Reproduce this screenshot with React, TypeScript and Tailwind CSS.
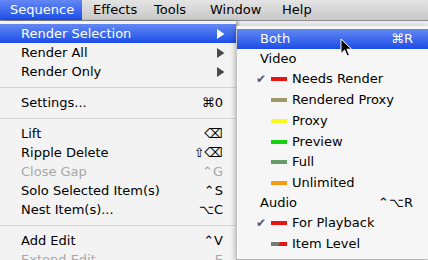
import clsx from "clsx";

type Row = {
  label: string;
  shortcut?: string;
  arrow?: boolean;
  active?: boolean;
  disabled?: boolean;
};

type SubRow = {
  label: string;
  shortcut?: string;
  bar?: string;
  split?: boolean;
  check?: boolean;
  active?: boolean;
  tall?: boolean;
};

const mainRows: (Row | "sep")[] = [
  { label: "Render Selection", arrow: true, active: true },
  { label: "Render All", arrow: true },
  { label: "Render Only", arrow: true },
  "sep",
  { label: "Settings...", shortcut: "⌘0" },
  "sep",
  { label: "Lift", shortcut: "⌫" },
  { label: "Ripple Delete", shortcut: "⇧⌫" },
  { label: "Close Gap", shortcut: "⌃G", disabled: true },
  { label: "Solo Selected Item(s)", shortcut: "⌃S" },
  { label: "Nest Item(s)...", shortcut: "⌥C" },
  "sep",
  { label: "Add Edit", shortcut: "⌃V" },
  { label: "Extend Edit", shortcut: "E", disabled: true },
];

const subRows: SubRow[] = [
  { label: "Both", shortcut: "⌘R", active: true },
  { label: "Video" },
  { label: "Needs Render", bar: "bg-[#e81414]", check: true },
  { label: "Rendered Proxy", bar: "bg-[#9c9a6c]", tall: true },
  { label: "Proxy", bar: "bg-[#f8f822]", tall: true },
  { label: "Preview", bar: "bg-[#12d012]", tall: true },
  { label: "Full", bar: "bg-[#6a9a6a]" },
  { label: "Unlimited", bar: "bg-[#f8990f]", tall: true },
  { label: "Audio", shortcut: "⌃⌥R" },
  { label: "For Playback", bar: "bg-[#e81414]", check: true },
  { label: "Item Level", split: true, tall: true },
];

function Arrow({ white }: { white?: boolean }) {
  return (
    <svg width="8" height="10" viewBox="0 0 8 10">
      <polygon points="0,0 7.5,5 0,10" fill={white ? "#ffffff" : "#4a4a4a"} />
    </svg>
  );
}

function MenuItem({ row }: { row: Row }) {
  return (
    <div
      className={clsx(
        "flex h-[19px] items-center pl-[21px] leading-[19px]",
        row.arrow ? "pr-[11px]" : "pr-[13px]",
        row.active
          ? "bg-linear-to-b from-[#6387f4] to-[#1d4be6] text-white"
          : row.disabled
            ? "text-[#a8a8a8]"
            : "text-black"
      )}
    >
      <span className="flex-1">{row.label}</span>
      {row.shortcut && <span>{row.shortcut}</span>}
      {row.arrow && <Arrow white={row.active} />}
    </div>
  );
}

function SubItem({ row }: { row: SubRow }) {
  const hasBar = row.bar || row.split;
  return (
    <div
      className={clsx(
        "flex items-center pr-[15px]",
        row.tall ? "h-[21px]" : "h-[20px]",
        hasBar ? "pl-[19px]" : "pl-[23px]",
        row.active ? "bg-linear-to-b from-[#6387f4] to-[#1d4be6] text-white" : "text-black"
      )}
    >
      {hasBar && (
        <>
          <span className="w-[15px] text-[12px] leading-none text-[#5c5c5c]">{row.check ? "✔" : ""}</span>
          {row.split ? (
            <svg width="16" height="4" viewBox="0 0 16 4" className="mr-[5px]">
              <rect width="16" height="4" fill="#7a7a7a" />
              <polygon points="7,4 16,4 16,0 9.5,0" fill="#e81414" />
            </svg>
          ) : (
            <span className={clsx("mr-[5px] h-[4px] w-[16px]", row.bar)} />
          )}
        </>
      )}
      <span className="flex-1">{row.label}</span>
      {row.shortcut && <span>{row.shortcut}</span>}
    </div>
  );
}

export default function App() {
  return (
    <div className="relative h-[260px] w-[428px] overflow-hidden bg-[#ececec] font-['DejaVu_Sans',sans-serif] text-[13px]">
      <div className="flex h-[21px] border-b border-[#8c8c8c] bg-linear-to-b from-[#e4e4e4] to-[#c8c8c8] leading-[20px] text-black">
        <div className="w-[82px] bg-linear-to-b from-[#6387f4] to-[#1d4be6] pl-[10px] text-white">Sequence</div>
        <div className="w-[62px] pl-[11px]">Effects</div>
        <div className="w-[56px] pl-[10px]">Tools</div>
        <div className="w-[72px] pl-[10px]">Window</div>
        <div className="pl-[10px]">Help</div>
      </div>

      <div className="flex">
        <div className="relative z-0 h-[239px] w-[236px] bg-[#f3f3f3] pt-[3px] shadow-[2px_0_3px_rgba(0,0,0,0.35)]">
          {mainRows.map((row, i) =>
            row === "sep" ? (
              <div key={i} className="flex h-[12px] items-center">
                <div className="h-px w-full bg-[#d4d4d4]" />
              </div>
            ) : (
              <MenuItem key={i} row={row} />
            )
          )}
        </div>

        <div className="relative z-10 mt-[5px] h-[233px] flex-1 border-l border-[#c4c4c4] bg-[#f6f6f6] pt-[3px] shadow-[0_2px_6px_rgba(0,0,0,0.35)]">
          {subRows.map((row, i) => (
            <SubItem key={i} row={row} />
          ))}
        </div>
      </div>

      <svg width="14" height="20" viewBox="0 0 14 20" className="absolute left-[340px] top-[38px] z-20">
        <path d="M1 1 L1 15.5 L4.6 12 L7.2 18 L9.4 17 L6.9 11.2 L11.6 11.2 Z" fill="#000" stroke="#fff" strokeWidth="1" strokeLinejoin="round" />
      </svg>
    </div>
  );
}
